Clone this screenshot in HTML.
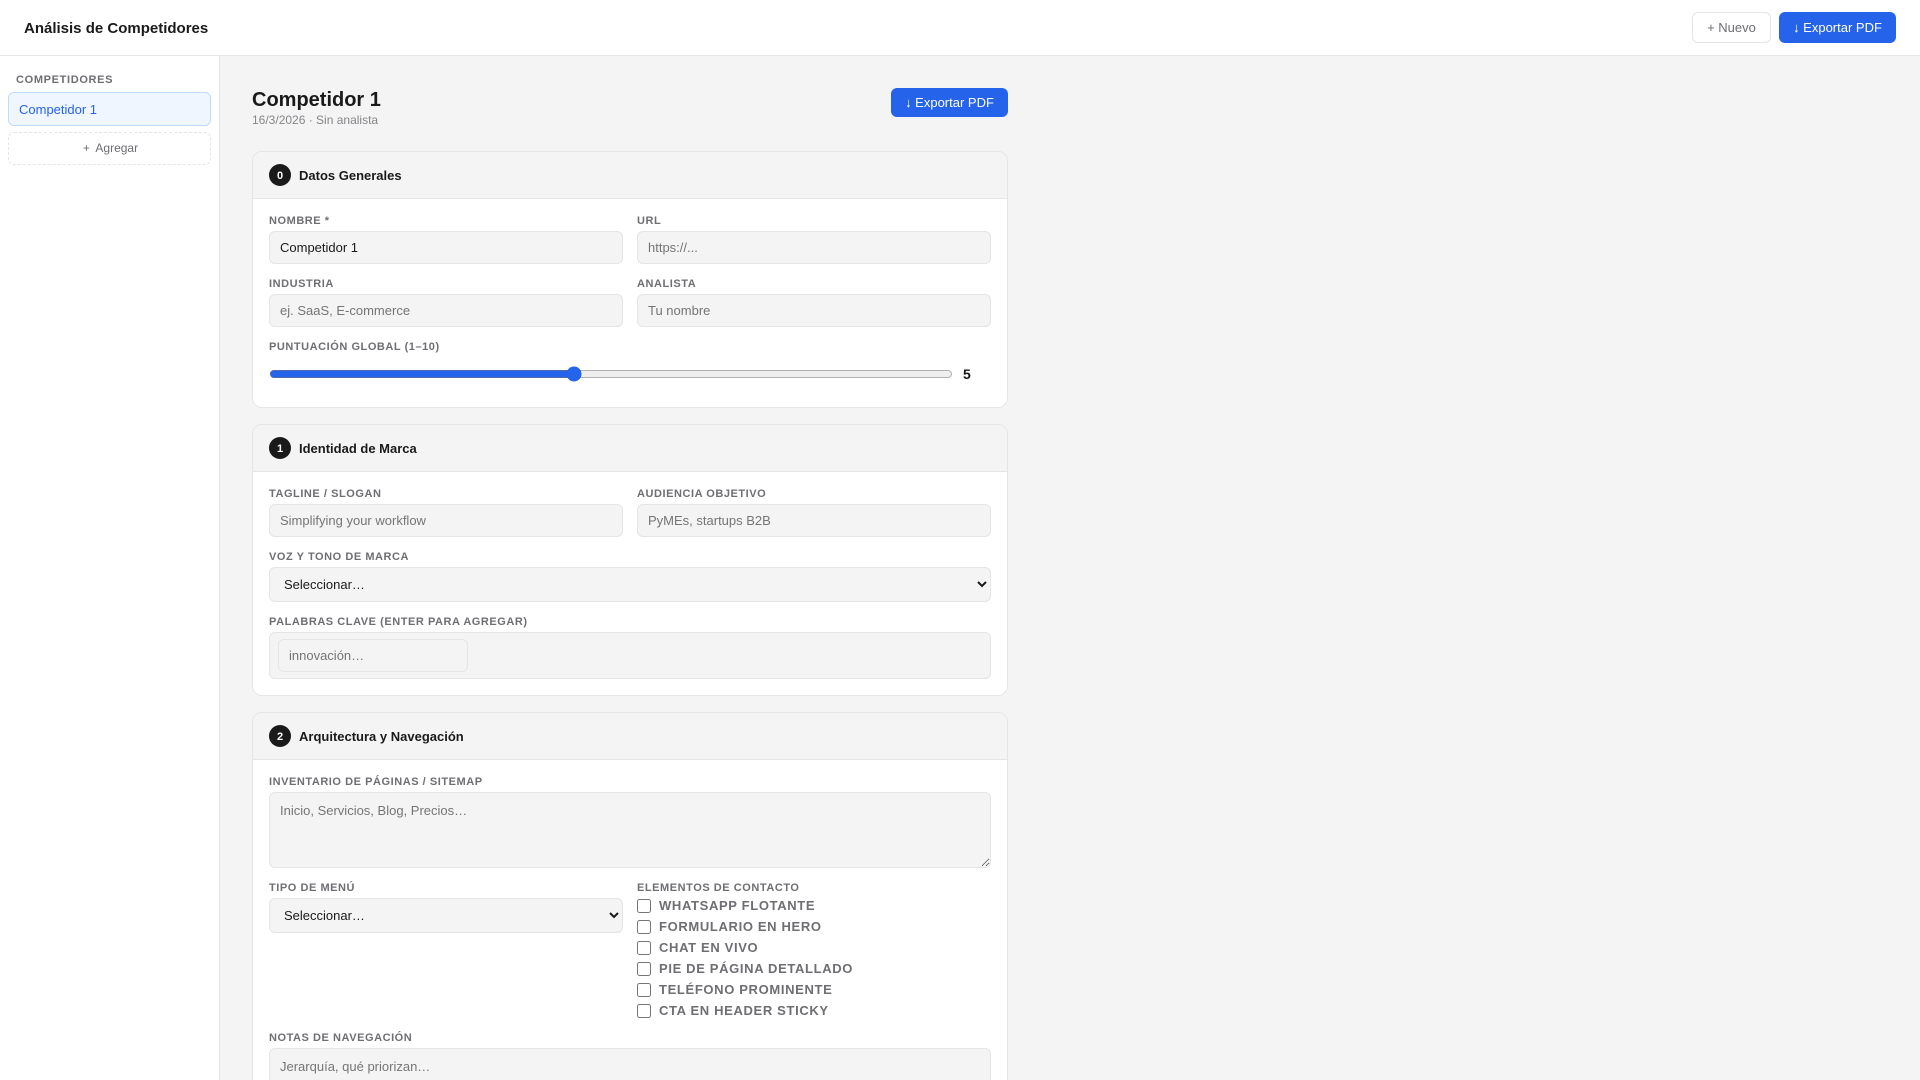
<!DOCTYPE html>
<html lang="es"><head><meta charset="utf-8"><title>Análisis de Competidores</title>
<style>
*{box-sizing:border-box}
html,body{margin:0;padding:0;width:1920px;height:1080px;overflow:hidden;background:#f4f4f4;color:#1a1a1a;font-family:"Liberation Sans",sans-serif;font-size:13px}
#root{position:relative;width:1920px;height:1080px;overflow:hidden;background:#f4f4f4}
header{position:absolute;left:0;top:0;width:1920px;height:56px;background:#fff;border-bottom:1px solid #e5e5e5}
header h1{position:absolute;left:24px;top:20px;margin:0;font-size:15px;line-height:18px;font-weight:700}
.btn{position:absolute;font:13px "Liberation Sans",sans-serif;border-radius:6px;text-align:center;white-space:nowrap}
.ghost{left:1692px;top:12px;width:79px;height:31px;line-height:29px;background:#fff;border:1px solid #e5e5e5;color:#6e6e73}
.prim{left:1779px;top:12px;width:117px;height:31px;line-height:31px;background:#2563eb;color:#fff}
aside{position:absolute;left:0;top:56px;width:220px;height:1024px;background:#fff;border-right:1px solid #e5e5e5}
aside .t{position:absolute;left:16px;top:18px;font-size:11px;line-height:13px;font-weight:700;color:#6e6e73;letter-spacing:.66px}
aside .a{position:absolute;left:8px;top:36px;width:203px;height:34px;line-height:34px;background:#eff6ff;border:1px solid #bfdbfe;border-radius:6px;color:#2563eb;padding-left:10px}
aside .b{position:absolute;left:8px;top:76px;width:203px;height:33px;line-height:31px;border:1px dashed #e5e5e5;border-radius:6px;color:#6e6e73;font-size:12px;text-align:center;padding-left:2px}
aside .b span{display:inline-block;width:12.5px;text-align:left}
main{position:absolute;left:252px;top:56px;width:756px}
h2{position:absolute;left:0;top:32px;margin:0;font-size:20px;line-height:24px;font-weight:700;white-space:nowrap}
.sub{position:absolute;left:0;top:57px;font-size:12px;line-height:14px;color:#86868b;white-space:nowrap}
.exp{left:639px;top:32px;width:117px;height:29px;line-height:29px;background:#2563eb;color:#fff}
.card{position:absolute;left:0;width:756px;background:#fff;border:1px solid #e5e5e5;border-radius:10px;overflow:hidden}
.head{height:47px;background:#f4f4f4;border-bottom:1px solid #e5e5e5;position:relative}
.num{position:absolute;left:16px;top:12px;width:22px;height:22px;border-radius:50%;background:#1a1a1a;color:#fff;font-size:11px;font-weight:700;display:flex;align-items:center;justify-content:center;padding-top:1px}
.ttl{position:absolute;left:46px;top:16px;font-size:13px;line-height:16px;font-weight:700;white-space:nowrap}
.card .l{position:absolute;font-size:11px;line-height:13px;font-weight:700;color:#6e6e73;letter-spacing:.55px;text-transform:uppercase;white-space:nowrap}
.f{position:absolute;display:block;height:33px;margin:0;padding:0 10px;background:#f4f4f4;border:1px solid #e5e5e5;border-radius:6px;font:13px "Liberation Sans",sans-serif;color:#1a1a1a;outline:0}
textarea.f{padding:10px 10px}
select.f{height:35px}
.w1{left:16px;width:354px}.w2{left:384px;width:354px}.w3{left:16px;width:722px}
.card .c2{left:384px}
.ck{position:absolute;left:384px;display:flex;align-items:center;font-size:13px;line-height:15px;font-weight:700;color:#6e6e73;letter-spacing:.65px;text-transform:uppercase;white-space:nowrap;height:15px}
.ck input{margin:0 8px 0 0;width:14px;height:14px;flex:none}
input[type=range]{position:absolute;left:16px;width:684px;height:16px;margin:0;accent-color:#2563eb}
.v{position:absolute;left:710px;font-size:14px;line-height:16px;font-weight:700}
</style></head><body>
<div id="root">
<header><h1>Análisis de Competidores</h1><div class="btn ghost">+ Nuevo</div><div class="btn prim">↓ Exportar PDF</div></header>
<aside><div class="t">COMPETIDORES</div><div class="a">Competidor 1</div><div class="b"><span>+</span>Agregar</div></aside>
<main>
<h2>Competidor 1</h2><div class="sub">16/3/2026 · Sin analista</div><div class="btn exp">↓ Exportar PDF</div>

<section class="card" style="top:95px;height:257px">
<div class="head"><div class="num">0</div><div class="ttl">Datos Generales</div></div>
<div class="l" style="left:16px;top:63px">Nombre *</div><input class="f w1" style="top:79px" value="Competidor 1">
<div class="l c2" style="top:63px">URL</div><input class="f w2" style="top:79px" placeholder="https://...">
<div class="l" style="left:16px;top:126px">Industria</div><input class="f w1" style="top:142px" placeholder="ej. SaaS, E-commerce">
<div class="l c2" style="top:126px">Analista</div><input class="f w2" style="top:142px" placeholder="Tu nombre">
<div class="l" style="left:16px;top:189px">Puntuación Global (1–10)</div>
<input type="range" min="1" max="10" value="5" style="top:214px"><div class="v" style="top:214px">5</div>
</section>

<section class="card" style="top:368px;height:272px">
<div class="head"><div class="num">1</div><div class="ttl">Identidad de Marca</div></div>
<div class="l" style="left:16px;top:63px">Tagline / Slogan</div><input class="f w1" style="top:79px" placeholder="Simplifying your workflow">
<div class="l c2" style="top:63px">Audiencia Objetivo</div><input class="f w2" style="top:79px" placeholder="PyMEs, startups B2B">
<div class="l" style="left:16px;top:126px">Voz y Tono de Marca</div><select class="f w3" style="top:142px"><option>Seleccionar…</option></select>
<div class="l" style="left:16px;top:191px">Palabras Clave (Enter para agregar)</div>
<div class="f w3" style="top:207px;height:47px"></div>
<input class="f" style="left:25px;top:214px;width:190px" placeholder="innovación…">
</section>

<section class="card" style="top:656px;height:368px;border-bottom:0;border-radius:10px 10px 0 0">
<div class="head"><div class="num">2</div><div class="ttl">Arquitectura y Navegación</div></div>
<div class="l" style="left:16px;top:63px">Inventario de Páginas / Sitemap</div><textarea class="f w3" style="top:79px;height:76px" placeholder="Inicio, Servicios, Blog, Precios…"></textarea>
<div class="l" style="left:16px;top:169px">Tipo de Menú</div><select class="f w1" style="top:185px"><option>Seleccionar…</option></select>
<div class="l c2" style="top:169px">Elementos de Contacto</div>
<label class="ck" style="top:185px"><input type="checkbox">WhatsApp flotante</label>
<label class="ck" style="top:206px"><input type="checkbox">Formulario en hero</label>
<label class="ck" style="top:227px"><input type="checkbox">Chat en vivo</label>
<label class="ck" style="top:248px"><input type="checkbox">Pie de página detallado</label>
<label class="ck" style="top:269px"><input type="checkbox">Teléfono prominente</label>
<label class="ck" style="top:290px"><input type="checkbox">CTA en header sticky</label>
<div class="l" style="left:16px;top:319px">Notas de Navegación</div><textarea class="f w3" style="top:335px;height:33px;border-bottom:0;border-radius:6px 6px 0 0;resize:none;overflow:hidden" placeholder="Jerarquía, qué priorizan…"></textarea>
</section>
</main>
</div>
</body></html>
